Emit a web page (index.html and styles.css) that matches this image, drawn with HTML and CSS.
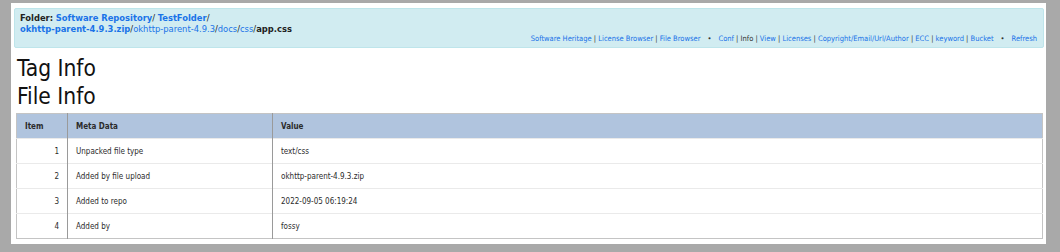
FILE: index.html
```html
<!DOCTYPE html>
<html>
<head>
<meta charset="utf-8">
<link rel="stylesheet" href="styles.css">
</head>
<body>
<div class="frame">
  <div class="folder">
    <div class="path">
      <div><b class="label">Folder:</b> <a class="strong" href="#">Software Repository</a>/ <a class="strong" href="#">TestFolder</a>/</div>
      <div><a class="strong" href="#">okhttp-parent-4.9.3.zip</a>/<a href="#">okhttp-parent-4.9.3</a>/<a href="#">docs</a>/<a href="#">css</a>/<b class="label">app.css</b></div>
    </div>
    <div class="nav">
      <a href="#">Software Heritage</a> | <a href="#">License Browser</a> | <a href="#">File Browser</a><span class="dot">&bull;</span><a href="#">Conf</a> | <span class="cur">Info</span> | <a href="#">View</a> | <a href="#">Licenses</a> | <a href="#">Copyright/Email/Url/Author</a> | <a href="#">ECC</a> | <a href="#">keyword</a> | <a href="#">Bucket</a><span class="dot">&bull;</span><a href="#">Refresh</a>
    </div>
  </div>
  <h2 class="title">Tag Info</h2>
  <h2 class="title">File Info</h2>
  <table class="info">
    <thead>
      <tr><th class="c-item">Item</th><th class="c-meta">Meta Data</th><th class="c-val">Value</th></tr>
    </thead>
    <tbody>
      <tr><td class="num">1</td><td>Unpacked file type</td><td>text/css</td></tr>
      <tr><td class="num">2</td><td>Added by file upload</td><td>okhttp-parent-4.9.3.zip</td></tr>
      <tr><td class="num">3</td><td>Added to repo</td><td>2022-09-05 06:19:24</td></tr>
      <tr><td class="num">4</td><td>Added by</td><td>fossy</td></tr>
    </tbody>
  </table>
</div>
</body>
</html>
```
FILE: styles.css
```css
html, body {
  margin: 0;
  padding: 0;
}
body {
  background: #a9a9a9;
  width: 1060px;
  height: 252px;
  overflow: hidden;
  padding: 3px 14px 8px 11px;
  box-sizing: border-box;
  font-family: "DejaVu Sans Condensed", "DejaVu Sans", sans-serif;
}
.frame {
  background: #fff;
  height: 241px;
  padding: 5px 2px 0 3px;
  box-sizing: border-box;
}
.folder {
  background: #d1ecf1;
  border: 1px solid #bee5eb;
  border-radius: 2px;
  height: 40px;
  box-sizing: border-box;
  padding: 3px 6px 0 5px;
}
.path {
  font-size: 9.3px;
  line-height: 11px;
  color: #1a1a1a;
}
.label {
  font-weight: bold;
  color: #222;
}
a {
  color: #1a73e8;
  text-decoration: none;
}
a.strong {
  font-weight: bold;
}
.nav {
  text-align: right;
  font-size: 7.5px;
  line-height: 11px;
  color: #333;
  margin-top: -1px;
}
.dot {
  display: inline-block;
  padding: 0 7px;
  color: #333;
}
.cur {
  color: #333;
}
.title {
  font-weight: normal;
  font-size: 22.6px;
  line-height: 28px;
  margin: 0 0 0 3px;
  color: #111;
}
.title:first-of-type {
  margin-top: 6px;
}
.info {
  margin: 3px 0 0 2px;
  width: 1027px;
  border-collapse: collapse;
  border: 1px solid #c4c4c4;
  font-size: 8px;
  color: #2b2b2b;
}
.info th {
  background: #b0c4de;
  text-align: left;
  font-weight: bold;
  height: 25px;
  padding: 0 8px;
  box-sizing: border-box;
  border-left: 1px solid #9a9a9a;
}
.info td {
  height: 25px;
  padding: 0 8px;
  box-sizing: border-box;
  border-top: 1px solid #eaeaea;
  border-left: 1px solid #9a9a9a;
}
.info th:first-child, .info td:first-child {
  border-left: none;
}
.c-item { width: 51px; }
.c-meta { width: 205px; }
.num { text-align: right; }
```
